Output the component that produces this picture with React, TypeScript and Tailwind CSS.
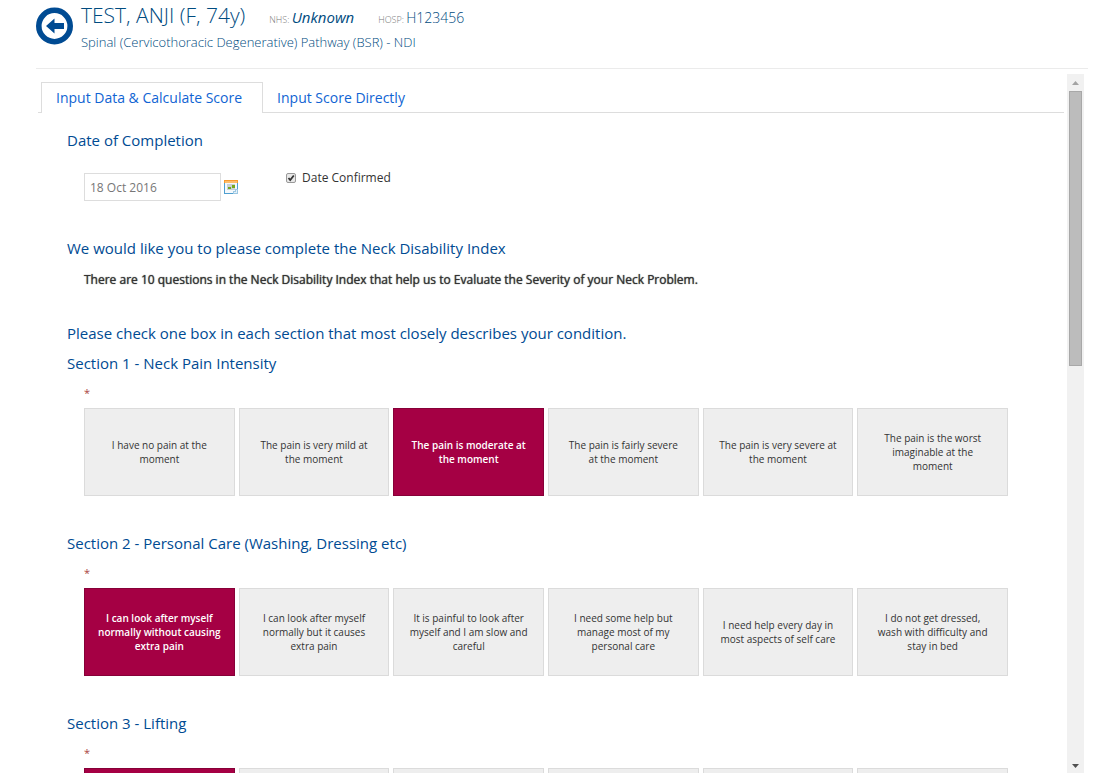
import { useState, type ReactNode } from "react";

type Section = { id: string; title: string; options: string[]; initial: number };

const sections: Section[] = [
  {
    id: "pain",
    title: "Section 1 - Neck Pain Intensity",
    initial: 2,
    options: [
      "I have no pain at the moment",
      "The pain is very mild at the moment",
      "The pain is moderate at the moment",
      "The pain is fairly severe at the moment",
      "The pain is very severe at the moment",
      "The pain is the worst imaginable at the moment",
    ],
  },
  {
    id: "care",
    title: "Section 2 - Personal Care (Washing, Dressing etc)",
    initial: 0,
    options: [
      "I can look after myself normally without causing extra pain",
      "I can look after myself normally but it causes extra pain",
      "It is painful to look after myself and I am slow and careful",
      "I need some help but manage most of my personal care",
      "I need help every day in most aspects of self care",
      "I do not get dressed, wash with difficulty and stay in bed",
    ],
  },
  {
    id: "lifting",
    title: "Section 3 - Lifting",
    initial: 0,
    options: ["", "", "", "", "", ""],
  },
];

function BackIcon() {
  return (
    <svg viewBox="0 0 38 38" className="size-[38px]" aria-hidden="true">
      <circle cx="18.500" cy="19" r="15.700" fill="#fff" stroke="#004b93" strokeWidth="5.600" />
      <path d="M10 19 18.500 11.500V16H28v6h-9.500v4.500Z" fill="#004b93" />
    </svg>
  );
}

function CalendarIcon() {
  return (
    <svg viewBox="0 0 14 14" className="size-3.5" shapeRendering="crispEdges" aria-hidden="true">
      <rect width="14" height="14" fill="#4f9fd0" />
      <rect x="1" y="3" width="12" height="10" fill="#f4f8fb" />
      <rect width="14" height="3" fill="#f79a2f" />
      <rect x="1" y="1" width="12" height="2" fill="#fbbd6c" />
      <rect x="3" y="4" width="8" height="6" fill="#c9cfd3" />
      <rect x="4" y="7" width="3" height="2" fill="#76a81c" />
      <rect x="8" y="5" width="3" height="3" fill="#76a81c" />
      <path d="M9 14v-3h2v-2h3v5Z" fill="#9cc7e2" />
      <path d="M10 12h2v-2h1v3h-3Z" fill="#e4f1f9" />
    </svg>
  );
}

function Heading({ children }: { children: ReactNode }) {
  return <h2 className="text-[15px] leading-5 text-[#004b93]">{children}</h2>;
}

function QuestionSection({ section }: { section: Section }) {
  const [selected, setSelected] = useState(section.initial);
  return (
    <section className="mb-[37px]">
      <Heading>{section.title}</Heading>
      <div className="pl-[17px]">
        <p className="mt-[11px] mb-1.5 text-[11px] leading-[18px] text-[#a94442]">*</p>
        <div className="grid grid-cols-6 gap-1">
          {section.options.map((option, i) => (
            <button
              key={i}
              type="button"
              aria-pressed={selected === i}
              onClick={() => setSelected(i)}
              className={
                selected === i
                  ? "h-[88px] border border-[#870038] bg-[#a50044] px-3 text-center text-[10px] leading-3.5 font-semibold text-white"
                  : "h-[88px] border border-[#dbdbdb] bg-[#eeeeee] px-3.5 text-center text-[10px] leading-3.5 text-[#333]"
              }
            >
              {option}
            </button>
          ))}
        </div>
      </div>
    </section>
  );
}

function ScrollTrack() {
  return (
    <div className="flex w-[17px] shrink-0 flex-col items-center bg-[#f1f1f1] pt-1.5 pb-[5px]" aria-hidden="true">
      <svg viewBox="0 0 7 4" className="mt-px h-1 w-[7px] shrink-0">
        <path d="M0 4 3.500 0 7 4Z" fill="#a3a3a3" />
      </svg>
      <div className="mt-1.5 h-[275px] w-[13px] shrink-0 border border-[#a8a8a8] bg-[#bcbcbc]" />
      <svg viewBox="0 0 7 4" className="mt-auto h-1 w-[7px] shrink-0">
        <path d="M0 0 3.500 4 7 0Z" fill="#505050" />
      </svg>
    </div>
  );
}

export default function App() {
  const [confirmed, setConfirmed] = useState(true);
  const [date, setDate] = useState("18 Oct 2016");

  return (
    <div className="flex h-screen flex-col overflow-hidden bg-white pr-[21px] pl-9 font-['Open_Sans',sans-serif]">
      <header className="flex h-[69px] shrink-0 items-start border-b border-[#ebebeb]">
        <button type="button" aria-label="Back" className="mt-[7px]">
          <BackIcon />
        </button>
        <div className="ml-[7px] text-[#004b80]">
          <div className="flex items-baseline">
            <h1 className="text-[21px] leading-[30px] font-light">TEST, ANJI (F, 74y)</h1>
            <p className="ml-6 text-[15px]">
              <span className="text-[9px] font-light text-[#777]">NHS: </span>
              <em>Unknown</em>
            </p>
            <p className="ml-6 text-sm font-light">
              <span className="text-[9px] text-[#777]">HOSP: </span>H123456
            </p>
          </div>
          <p className="text-[13px] leading-6 font-light">Spinal (Cervicothoracic Degenerative) Pathway (BSR) - NDI</p>
        </div>
      </header>

      <div className="mt-[5px] flex min-h-0 flex-1 pr-1">
        <main className="min-w-0 flex-1 overflow-hidden pt-2 pr-[3px] pl-0.5">
          <nav className="flex items-end text-sm text-[#1064d3]">
            <span className="w-[3px] border-b border-[#ddd]" />
            <a href="#input" className="h-[31px] border border-b-0 border-[#ddd] pt-[5px] pr-5 pl-3.5 leading-5">
              Input Data &amp; Calculate Score
            </a>
            <a href="#direct" className="h-[31px] flex-1 border-b border-[#ddd] px-3.5 pt-1.5 leading-5">
              Input Score Directly
            </a>
          </nav>

          <form className="pt-[17px] pr-14 pl-[29px]">
            <Heading>Date of Completion</Heading>
            <div className="mt-[23px] flex items-start pl-[17px]">
              <input
                type="text"
                aria-label="Date of Completion"
                value={date}
                onChange={(e) => setDate(e.target.value)}
                className="h-7 w-[137px] border border-[#ddd] px-[5px] text-xs text-[#777]"
              />
              <button type="button" aria-label="Choose date" className="mt-[7px] ml-[3px]">
                <CalendarIcon />
              </button>
              <label className="relative -mt-1 ml-12 flex items-center gap-1.5 text-xs leading-[18px] text-[#333]">
                <input
                  type="checkbox"
                  checked={confirmed}
                  onChange={(e) => setConfirmed(e.target.checked)}
                  className="peer size-2.5 appearance-none rounded-xs border border-[#999] bg-[#e8e8e8]"
                />
                <svg
                  viewBox="0 0 10 10"
                  className="pointer-events-none absolute left-0 hidden size-2.5 peer-checked:block"
                  aria-hidden="true"
                >
                  <path d="M2.500 5 4.200 7 7.800 2.500" fill="none" stroke="#333" strokeWidth="1.800" />
                </svg>
                Date Confirmed
              </label>
            </div>

            <div className="mt-[37px]">
              <Heading>We would like you to please complete the Neck Disability Index</Heading>
              <p className="mt-[13px] pl-[17px] text-xs leading-[18px] text-[#333] [text-shadow:0_0_1px_#333]">
                There are 10 questions in the Neck Disability Index that help us to Evaluate the Severity of your Neck
                Problem.
              </p>
            </div>

            <div className="mt-[34px] mb-2.5">
              <Heading>Please check one box in each section that most closely describes your condition.</Heading>
            </div>

            {sections.map((section) => (
              <QuestionSection key={section.id} section={section} />
            ))}
          </form>
        </main>
        <ScrollTrack />
      </div>
    </div>
  );
}
